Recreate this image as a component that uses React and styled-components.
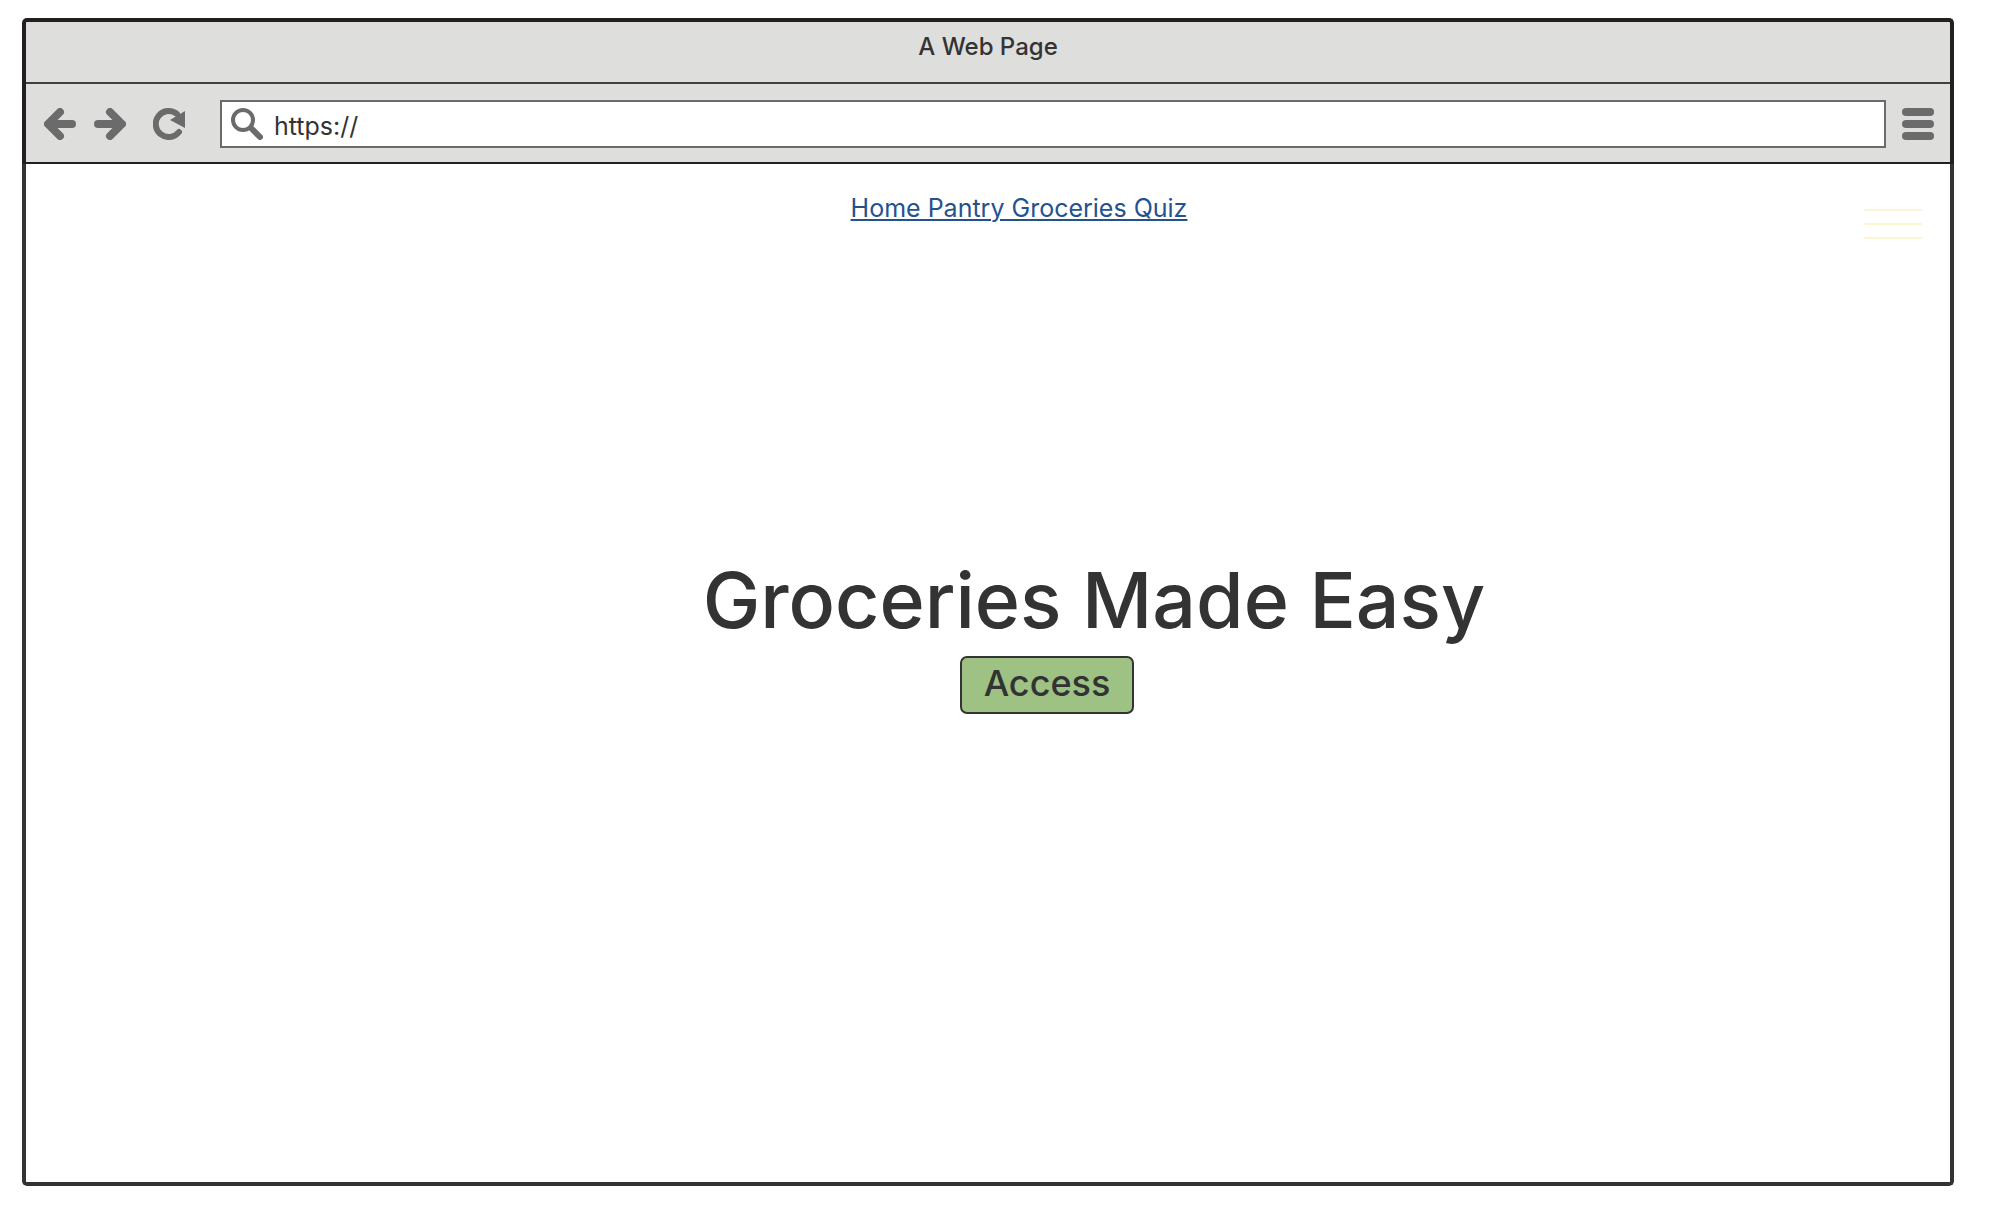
import React from "react";
import styled, { createGlobalStyle } from "styled-components";

const ink = "#333333";
const frame = "#231f20";
const iconGrey = "#6b6b6b";

const GlobalStyle = createGlobalStyle`
  *, *::before, *::after { box-sizing: border-box; }
  body {
    margin: 0;
    background: #ffffff;
    color: ${ink};
    font-family: Inter, "Liberation Sans", sans-serif;
    font-weight: 500;
  }
`;

const Page = styled.div`
  display: flex;
  flex-direction: column;
  min-height: 100vh;
  padding: 18px 38px 34px 22px;
`;

const BrowserChrome = styled.header`
  border: 4px solid ${frame};
  border-bottom: 0;
  border-radius: 5px 5px 0 0;
  background: #dededd;
`;

const TitleBar = styled.div`
  height: 62px;
  padding-top: 9px;
  border-bottom: 2px solid #3f4143;
  font-size: 24px;
  line-height: 32px;
  text-align: center;
`;

const Toolbar = styled.div`
  display: flex;
  align-items: center;
  gap: 16px;
  padding: 16px 16px 14px 18px;
  border-bottom: 2px solid ${frame};
`;

const NavButtons = styled.div`
  display: flex;
  gap: 18px;
  padding-right: 19px;
`;

const IconButton = styled.button`
  display: block;
  flex: none;
  width: 32px;
  height: 32px;
  margin: 0 0 0 ${(p) => (p.$spaced ? 9 : 0)}px;
  padding: 0;
  border: 0;
  background: none;
  color: ${iconGrey};
  cursor: pointer;
`;

const Icon = styled.svg`
  display: block;
  flex: none;
  width: 32px;
  height: 32px;
  color: ${iconGrey};
`;

const AddressBar = styled.label`
  display: flex;
  flex: 1;
  align-items: center;
  gap: 11px;
  height: 48px;
  padding-left: 9px;
  border: 2px solid ${iconGrey};
  background: #ffffff;
`;

const AddressInput = styled.input`
  flex: 1;
  min-width: 0;
  height: 100%;
  padding: 4px 0 0;
  border: 0;
  outline: 0;
  background: transparent;
  color: ${ink};
  font: inherit;
  font-size: 25px;
  font-weight: 400;
`;

const Viewport = styled.div`
  flex: 1;
  border: 4px solid ${ink};
  border-top: 0;
  border-radius: 0 0 5px 5px;
`;

const SiteNav = styled.nav`
  display: grid;
  grid-template-columns: 1fr auto 1fr;
  align-items: start;
  padding: 28px 28px 0 90px;
`;

const SiteLink = styled.a`
  grid-column: 2;
  color: #24528f;
  font-size: 25px;
  font-weight: 400;
  line-height: 32px;
  text-decoration-thickness: 2px;
  text-underline-offset: 2px;
`;

const MenuButton = styled.button`
  display: grid;
  gap: 12px;
  justify-self: end;
  width: 58px;
  margin: 17px 0 0;
  padding: 0;
  border: 0;
  background: none;
  cursor: pointer;
`;

const MenuLine = styled.span`
  height: 2px;
  background: #fbf7d5;
`;

const Hero = styled.main`
  display: flex;
  flex-direction: column;
  align-items: center;
  gap: 10px;
  padding: 315px 0 48px;
`;

const HeroRow = styled.div`
  padding-left: ${(p) => p.$shift}px;
`;

const Heading = styled.h1`
  margin: 0;
  font-size: 77px;
  font-weight: 500;
  line-height: 92px;
`;

const AccessButton = styled.button`
  display: block;
  width: 174px;
  height: 58px;
  margin: 0;
  padding: 0 0 4px;
  border: 2px solid ${ink};
  border-radius: 7px;
  background: #9ec284;
  color: ${ink};
  font: inherit;
  font-size: 36px;
  line-height: 50px;
  cursor: pointer;
`;

function ArrowIcon({ forward }) {
  return (
    <Icon viewBox="0 0 32 32" fill="none" stroke="currentColor" strokeWidth="8" strokeLinecap="round" strokeLinejoin="round" aria-hidden="true">
      {forward ? (
        <path d="M4 16H27M16 4L28 16L16 28" />
      ) : (
        <path d="M28 16H5M16 4L4 16L16 28" />
      )}
    </Icon>
  );
}

function ReloadIcon() {
  return (
    <Icon viewBox="0 0 32 32" fill="none" aria-hidden="true">
      <path d="M26 24A13 13 0 1 1 24 6" stroke="currentColor" strokeWidth="6" strokeLinecap="round" />
      <path d="M32 3V20L17 12Z" fill="currentColor" />
    </Icon>
  );
}

function SearchIcon() {
  return (
    <Icon viewBox="0 0 32 32" fill="none" stroke="currentColor" aria-hidden="true">
      <circle cx="12" cy="12" r="10" strokeWidth="4" />
      <path d="M20.5 20.5L29 29" strokeWidth="6" strokeLinecap="round" />
    </Icon>
  );
}

function BarsIcon() {
  return (
    <Icon viewBox="0 0 32 32" fill="currentColor" aria-hidden="true">
      <rect y="0" width="32" height="8" rx="4" />
      <rect y="12" width="32" height="8" rx="4" />
      <rect y="24" width="32" height="8" rx="4" />
    </Icon>
  );
}

export default function App() {
  return (
    <Page>
      <GlobalStyle />
      <BrowserChrome>
        <TitleBar>A Web Page</TitleBar>
        <Toolbar>
          <NavButtons>
            <IconButton type="button" aria-label="Back"><ArrowIcon /></IconButton>
            <IconButton type="button" aria-label="Forward"><ArrowIcon forward /></IconButton>
            <IconButton type="button" aria-label="Reload" $spaced><ReloadIcon /></IconButton>
          </NavButtons>
          <AddressBar htmlFor="address">
            <SearchIcon />
            <AddressInput id="address" type="text" aria-label="Address" defaultValue="https://" />
          </AddressBar>
          <IconButton type="button" aria-label="Browser menu"><BarsIcon /></IconButton>
        </Toolbar>
      </BrowserChrome>
      <Viewport>
        <SiteNav>
          <SiteLink href="#home">Home Pantry Groceries Quiz</SiteLink>
          <MenuButton type="button" aria-label="Site menu">
            <MenuLine />
            <MenuLine />
            <MenuLine />
          </MenuButton>
        </SiteNav>
        <Hero>
          <HeroRow $shift={212}>
            <Heading>Groceries Made Easy</Heading>
          </HeroRow>
          <HeroRow $shift={118}>
            <AccessButton type="button">Access</AccessButton>
          </HeroRow>
        </Hero>
      </Viewport>
    </Page>
  );
}
